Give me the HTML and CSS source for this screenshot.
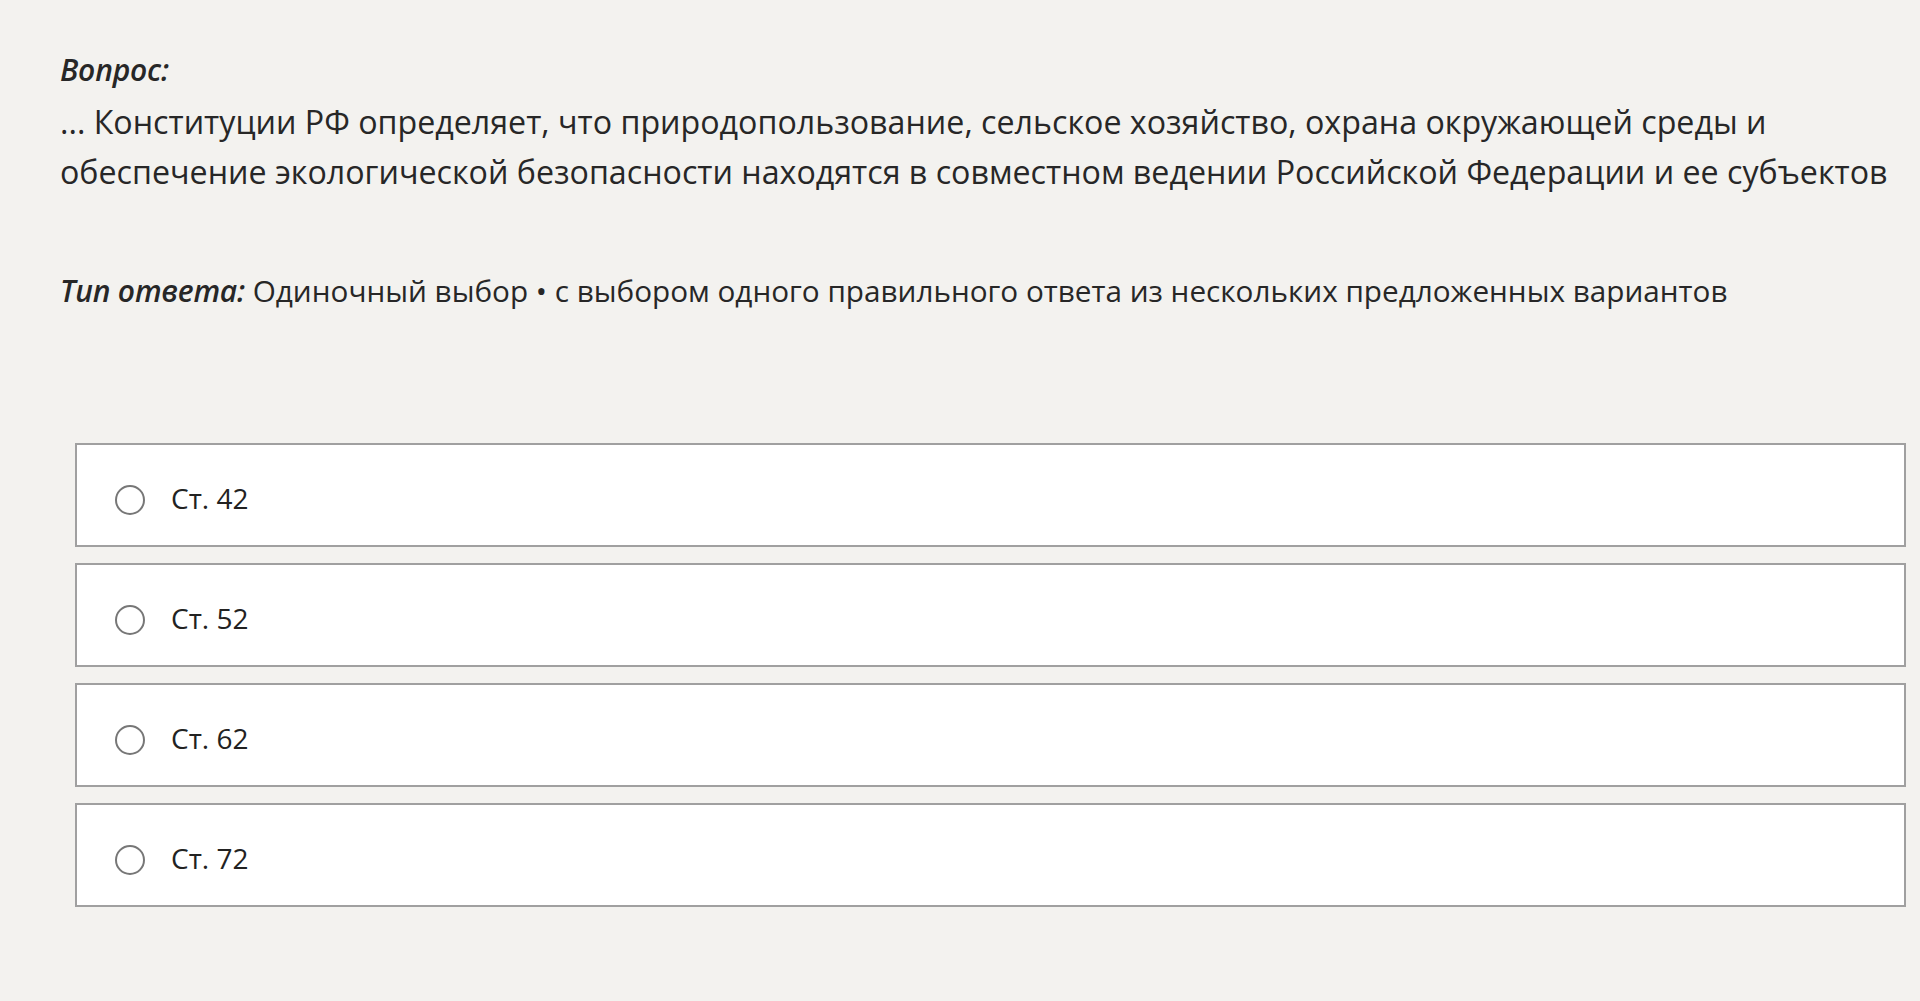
FILE: index.html
```html
<!DOCTYPE html>
<html lang="ru">
<head>
<meta charset="utf-8">
<title>Вопрос</title>
<link rel="stylesheet" href="styles.css">
</head>
<body>
<main class="page">
  <section class="question">
    <div class="label">Вопрос:</div>
    <p class="question-text">... Конституции РФ определяет, что природопользование, сельское хозяйство, охрана окружающей среды и обеспечение экологической безопасности находятся в совместном ведении Российской Федерации и ее субъектов</p>
    <p class="answer-type"><span class="label">Тип ответа:</span> <span class="answer-value">Одиночный выбор • с выбором одного правильного ответа из нескольких предложенных вариантов</span></p>
  </section>
  <ul class="options">
    <li class="option"><span class="radio"></span><span class="option-text">Ст. 42</span></li>
    <li class="option"><span class="radio"></span><span class="option-text">Ст. 52</span></li>
    <li class="option"><span class="radio"></span><span class="option-text">Ст. 62</span></li>
    <li class="option"><span class="radio"></span><span class="option-text">Ст. 72</span></li>
  </ul>
</main>
</body>
</html>
```

FILE: styles.css
```css
html, body {
  margin: 0;
  padding: 0;
  background: #f3f2ef;
}
body {
  font-family: "Open Sans", "Noto Sans", sans-serif;
  color: #272727;
}
.page {
  padding: 45px 14px 0 60px;
}
.question {
  font-size: 30px;
  line-height: 50px;
}
.label {
  font-weight: 600;
  font-style: italic;
  letter-spacing: -0.2px;
}
.question-text {
  margin: 2px 0 0 0;
  max-width: 1835px;
  font-size: 32.2px;
}
.answer-type {
  margin: 69px 0 0 0;
}
.answer-value {
  font-size: 29.7px;
}
.options {
  list-style: none;
  margin: 127px 0 0 15px;
  padding: 0;
  display: flex;
  flex-direction: column;
  gap: 16px;
}
.option {
  height: 104px;
  box-sizing: border-box;
  background: #ffffff;
  border: 2px solid #a0a0a0;
  display: flex;
  align-items: center;
  padding-left: 38px;
  gap: 26px;
}
.radio {
  width: 30px;
  height: 30px;
  box-sizing: border-box;
  border: 2px solid #777777;
  border-radius: 50%;
  flex: none;
  margin-top: 9px;
}
.option-text {
  font-size: 28px;
  line-height: 40px;
  margin-top: 5px;
  color: #222;
}
```
